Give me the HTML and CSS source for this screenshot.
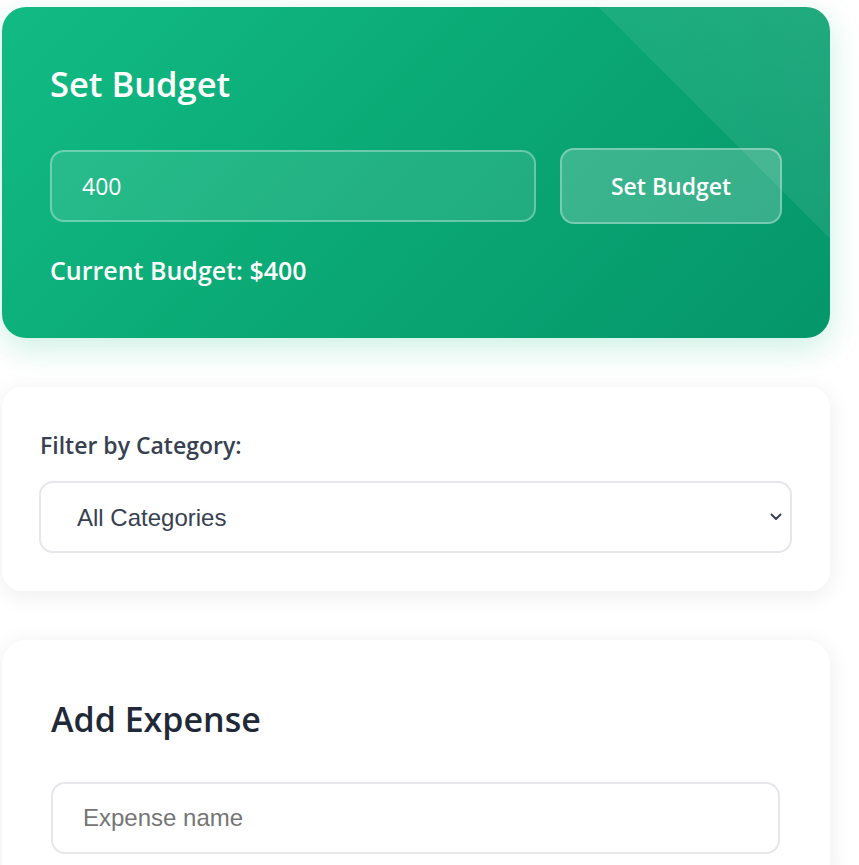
FILE: index.html
```html
<!DOCTYPE html>
<html lang="en">
<head>
<meta charset="utf-8">
<title>Budget</title>
<link rel="stylesheet" href="styles.css">
</head>
<body>
<main class="page">
  <section class="card budget-card">
    <h2 class="budget-title">Set Budget</h2>
    <div class="budget-row">
      <input class="budget-input" type="number" value="400">
      <button class="budget-btn" type="button">Set Budget</button>
    </div>
    <p class="budget-current">Current Budget: $400</p>
  </section>

  <section class="card filter-card">
    <label class="filter-label" for="cat">Filter by Category:</label>
    <div class="select-wrap">
      <select id="cat" class="filter-select">
        <option>All Categories</option>
      </select>
      <svg class="select-chevron" width="12" height="8" viewBox="0 0 12 8" aria-hidden="true">
        <path d="M1.5 1.5 L6 6 L10.5 1.5" fill="none" stroke="#374151" stroke-width="2" stroke-linecap="round" stroke-linejoin="round"/>
      </svg>
    </div>
  </section>

  <section class="card expense-card">
    <h2 class="expense-title">Add Expense</h2>
    <input class="expense-input" type="text" placeholder="Expense name">
  </section>
</main>
</body>
</html>
```

FILE: styles.css
```css
html, body {
  margin: 0;
  padding: 0;
  background: #ffffff;
}

body {
  font-family: "Open Sans", "Noto Sans", sans-serif;
  overflow: hidden;
}

.page {
  width: 828px;
  padding: 7px 0 0 2px;
  display: flex;
  flex-direction: column;
  gap: 49px;
}

.card {
  border-radius: 22px;
  box-sizing: border-box;
}

/* Budget card */
.budget-card {
  border-radius: 24px;
  padding: 49px 48px 52px;
  color: #ffffff;
  background:
    linear-gradient(45deg, transparent 80%, rgba(255, 255, 255, 0.07) 80%, rgba(255, 255, 255, 0.1) 100%),
    linear-gradient(135deg, #12bb83 0%, #0aa874 50%, #059669 100%);
  box-shadow: 0 10px 32px rgba(16, 185, 129, 0.22);
}

.budget-title {
  margin: 0;
  font-size: 34.5px;
  font-weight: 600;
  line-height: 56px;
}

.budget-row {
  display: flex;
  align-items: center;
  gap: 24px;
  margin-top: 36px;
}

.budget-input {
  flex: 1;
  min-width: 0;
  height: 72px;
  box-sizing: border-box;
  padding: 0 30px;
  border: 2px solid rgba(255, 255, 255, 0.32);
  border-radius: 14px;
  background: rgba(255, 255, 255, 0.1);
  color: #ffffff;
  font-family: "Open Sans", sans-serif;
  font-size: 23px;
  outline: none;
  -moz-appearance: textfield;
}

.budget-input::-webkit-outer-spin-button,
.budget-input::-webkit-inner-spin-button {
  -webkit-appearance: none;
  margin: 0;
}

.budget-btn {
  flex: none;
  width: 222px;
  height: 76px;
  box-sizing: border-box;
  border: 2px solid rgba(255, 255, 255, 0.32);
  border-radius: 14px;
  background: rgba(255, 255, 255, 0.2);
  color: #ffffff;
  font-family: "Open Sans", sans-serif;
  font-size: 23px;
  font-weight: 600;
  cursor: pointer;
}

.budget-current {
  margin: 30px 0 0;
  font-size: 25px;
  font-weight: 600;
  line-height: 32px;
}

/* Filter card */
.filter-card {
  border-radius: 20px;
  background: #ffffff;
  padding: 38px 38px 38px 37px;
  box-shadow: 0 4px 22px rgba(0, 0, 0, 0.08);
}

.filter-label {
  display: block;
  color: #374151;
  font-size: 23px;
  font-weight: 600;
  line-height: 40px;
  margin: 0 0 16px 1px;
}

.select-wrap {
  position: relative;
}

.filter-select {
  display: block;
  width: 100%;
  height: 72px;
  box-sizing: border-box;
  padding: 0 40px 0 36px;
  border: 2px solid #e5e7eb;
  border-radius: 14px;
  background: #ffffff;
  color: #374151;
  font-family: "Liberation Sans", Arial, sans-serif;
  font-size: 24px;
  -webkit-appearance: none;
  appearance: none;
  outline: none;
}

.select-chevron {
  position: absolute;
  right: 10px;
  top: 32px;
  pointer-events: none;
}

/* Expense card */
.expense-card {
  border-radius: 24px;
  background: #ffffff;
  padding: 48px 50px 40px 49px;
  box-shadow: 0 4px 22px rgba(0, 0, 0, 0.08);
}

.expense-title {
  margin: 11px 0 0;
  color: #1f2937;
  font-size: 34px;
  font-weight: 600;
  line-height: 40px;
}

.expense-input {
  display: block;
  width: 100%;
  height: 72px;
  box-sizing: border-box;
  margin-top: 43px;
  padding: 0 30px;
  border: 2px solid #e5e7eb;
  border-radius: 14px;
  background: #ffffff;
  color: #1f2937;
  font-family: "Liberation Sans", Arial, sans-serif;
  font-size: 24px;
  outline: none;
}

.expense-input::placeholder {
  color: #757575;
}
```
